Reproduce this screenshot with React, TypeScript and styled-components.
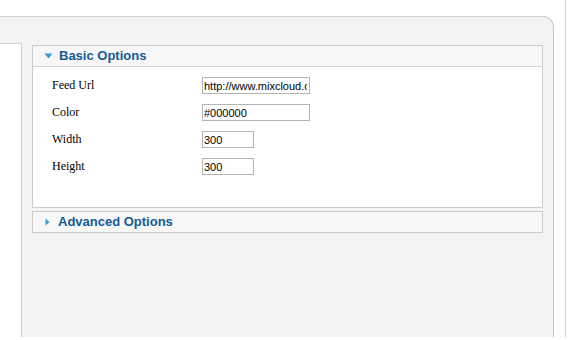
import React from "react";
import styled, { createGlobalStyle } from "styled-components";

const GlobalStyle = createGlobalStyle`
  html, body { margin: 0; padding: 0; background: #ffffff; }
  body { font-family: "Liberation Sans", Arial, sans-serif; }
`;

const Page = styled.div`
  display: flex;
  align-items: flex-start;
  width: 570px;
  height: 340px;
  overflow: hidden;
`;

const Frame = styled.div`
  box-sizing: border-box;
  width: 554px;
  height: 321px;
  margin-top: 16px;
  display: flex;
  background: #f3f3f3;
  border-top: 1px solid #cfcfcf;
  border-right: 1px solid #c8c8c8;
  border-top-right-radius: 11px;
`;

const SideColumn = styled.div`
  box-sizing: border-box;
  width: 22px;
  margin-top: 26px;
  background: #ffffff;
  border-top: 1px solid #d4d4d4;
  border-right: 1px solid #cccccc;
`;

const Content = styled.div`
  flex: 1;
  padding: 28px 10px 0 10px;
  display: flex;
  flex-direction: column;
  gap: 3px;
`;

const OuterLine = styled.div`
  width: 0;
  height: 337px;
  margin-left: 11px;
  border-left: 1px solid #cfcfcf;
`;

const Pane = styled.div`
  border: 1px solid #cccccc;
  background: #ffffff;
`;

const PaneHeader = styled.div<{ $open?: boolean }>`
  height: 20px;
  display: flex;
  align-items: center;
  padding-left: ${(p) => (p.$open ? 11 : 12)}px;
  gap: ${(p) => (p.$open ? 6 : 8)}px;
  background: #f7f7f7;
  border-bottom: ${(p) => (p.$open ? "1px solid #d4d4d4" : "none")};
  font-family: "Liberation Sans", Arial, sans-serif;
  font-weight: bold;
  font-size: 13px;
  line-height: 20px;
  color: #145c94;
`;

const Arrow = styled.svg`
  display: block;
  flex: none;
`;

const PaneBody = styled.div`
  padding: 10px 0 32px 19px;
  display: grid;
  grid-template-columns: 150px auto;
  grid-auto-rows: 17px;
  row-gap: 10px;
  align-items: center;
`;

const Label = styled.label`
  font-family: "Liberation Serif", "Times New Roman", serif;
  font-size: 12px;
  line-height: 17px;
  color: #000000;
`;

const Field = styled.input<{ $w: number }>`
  box-sizing: border-box;
  width: ${(p) => p.$w}px;
  height: 17px;
  margin: 0;
  padding: 0 2px 0 1px;
  border: 1px solid #b3b3b3;
  border-radius: 0;
  background: #ffffff;
  font-family: "Liberation Sans", Arial, sans-serif;
  font-size: 11px;
  color: #000000;
  outline: none;
`;

const DownArrow = () => (
  <Arrow width="9" height="6" viewBox="0 0 9 6">
    <path d="M0.5 0.5 L8.5 0.5 L4.5 5.5 Z" fill="#2f9bd3" />
  </Arrow>
);

const RightArrow = () => (
  <Arrow width="5" height="8" viewBox="0 0 5 8">
    <path d="M0.5 0.5 L4.5 4 L0.5 7.5 Z" fill="#2f9bd3" />
  </Arrow>
);

const fields = [
  { label: "Feed Url", value: "http://www.mixcloud.com/", w: 108 },
  { label: "Color", value: "#000000", w: 108 },
  { label: "Width", value: "300", w: 52 },
  { label: "Height", value: "300", w: 52 },
];

export default function App() {
  return (
    <>
      <GlobalStyle />
      <Page>
        <Frame>
          <SideColumn />
          <Content>
            <Pane>
              <PaneHeader $open>
                <DownArrow />
                Basic Options
              </PaneHeader>
              <PaneBody>
                {fields.map((f) => (
                  <React.Fragment key={f.label}>
                    <Label>{f.label}</Label>
                    <Field $w={f.w} defaultValue={f.value} />
                  </React.Fragment>
                ))}
              </PaneBody>
            </Pane>
            <Pane>
              <PaneHeader>
                <RightArrow />
                Advanced Options
              </PaneHeader>
            </Pane>
          </Content>
        </Frame>
        <OuterLine />
      </Page>
    </>
  );
}
